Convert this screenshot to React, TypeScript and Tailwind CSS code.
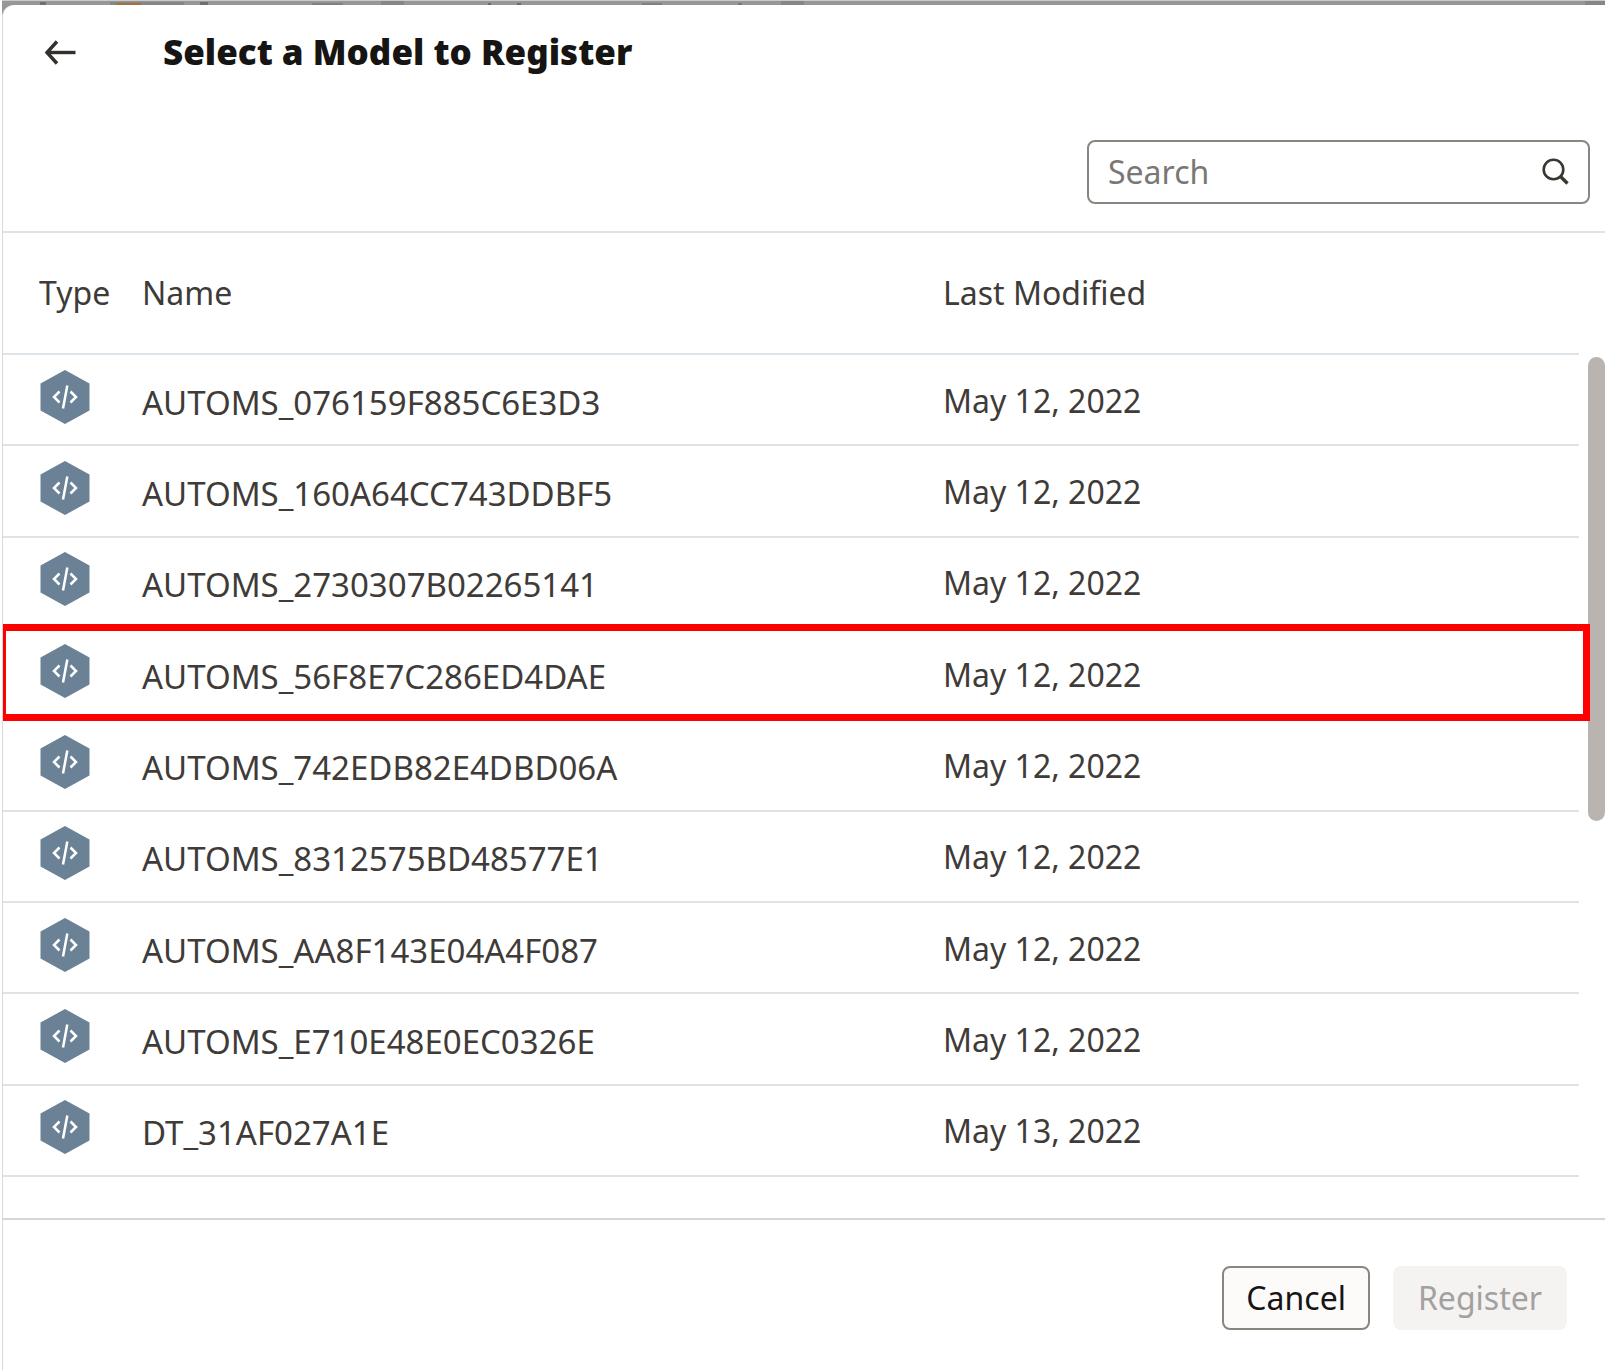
import React from "react";

const models = [
  { name: "AUTOMS_076159F885C6E3D3", modified: "May 12, 2022" },
  { name: "AUTOMS_160A64CC743DDBF5", modified: "May 12, 2022" },
  { name: "AUTOMS_2730307B02265141", modified: "May 12, 2022" },
  { name: "AUTOMS_56F8E7C286ED4DAE", modified: "May 12, 2022", marked: true },
  { name: "AUTOMS_742EDB82E4DBD06A", modified: "May 12, 2022" },
  { name: "AUTOMS_8312575BD48577E1", modified: "May 12, 2022" },
  { name: "AUTOMS_AA8F143E04A4F087", modified: "May 12, 2022" },
  { name: "AUTOMS_E710E48E0EC0326E", modified: "May 12, 2022" },
  { name: "DT_31AF027A1E", modified: "May 13, 2022" },
];

function BackdropEdge() {
  return (
    <svg className="block h-1 w-full" aria-hidden="true">
      <rect x="38" y="1" width="6" height="3" fill="#6f716e" />
      <rect x="108" y="1" width="74" height="3" fill="#858784" />
      <rect x="114" y="2" width="25" height="2" fill="#a5703c" />
      <rect x="198" y="1" width="8" height="3" fill="#6f716e" />
      <rect x="310" y="2" width="31" height="2" fill="#7f817e" />
      <rect x="379" width="23" height="4" fill="#858784" />
      <rect x="486" y="2" width="3" height="2" fill="#6a6c62" />
      <rect x="515" y="2" width="4" height="2" fill="#6a6c62" />
      <rect x="640" y="2" width="20" height="2" fill="#7f817e" />
      <rect x="736" y="2" width="4" height="2" fill="#6f7d76" />
      <rect x="779" width="23" height="4" fill="#858784" />
      <rect x="1583" width="25" height="4" fill="#858784" />
    </svg>
  );
}

function BackIcon() {
  return (
    <svg viewBox="0 0 32 30" className="h-[30px] w-8" fill="none" stroke="#33302d" strokeWidth="3.4" aria-hidden="true">
      <path d="M31.5 15.5H2.5" />
      <path d="M13 4.5 3 15.5 13 26.5" />
    </svg>
  );
}

function SearchIcon() {
  return (
    <svg viewBox="0 0 28 28" className="h-7 w-7" fill="none" stroke="#3a3632" strokeWidth="2.6" aria-hidden="true">
      <circle cx="12.5" cy="11.5" r="9.8" />
      <path d="M19.5 18.5l7 7" strokeWidth="3.4" />
    </svg>
  );
}

function ModelIcon() {
  return (
    <svg viewBox="0 0 50 56" className="h-14 w-[50px]" role="img" aria-label="Model">
      <path d="M25 1 49.5 14.5V41.5L25 55 .5 41.5V14.5Z" fill="#6b8296" />
      <g fill="none" stroke="#fff" strokeWidth="2.5">
        <path d="M19.5 22.5 14 28l5.5 5.5" />
        <path d="M30.5 22.5 36 28l-5.5 5.5" />
        <path d="M27.3 16.5 23 39.5" />
      </g>
    </svg>
  );
}

export default function App() {
  return (
    <div className="min-h-screen bg-white pr-[3px] pl-[2px] font-['Noto_Sans',sans-serif] text-[32px] leading-10 text-[#3e3b38]">
      <div className="border-t border-[#c9cbc8] bg-[#969896]">
        <BackdropEdge />
        <main className="flex min-h-[1365px] flex-col rounded-tl-xl border-l border-[#d9d9d9] bg-white">
          <header className="flex h-[94px] items-center gap-[87px] pl-[41px]">
            <button type="button" aria-label="Back">
              <BackIcon />
            </button>
            <h1 className="text-[35px] font-black text-[#161513]">Select a Model to Register</h1>
          </header>

          <div className="flex justify-end border-b-2 border-[#e4e2e0] pt-[41px] pr-[15px] pb-[27px]">
            <label className="flex h-16 w-[503px] items-center rounded-lg border-2 border-[#8b8580] px-[19px]">
              <input
                type="text"
                aria-label="Search"
                placeholder="Search"
                className="min-w-0 flex-1 outline-none placeholder:text-[#7a7774]"
              />
              <SearchIcon />
            </label>
          </div>

          <section className="flex items-start gap-[9px]">
            <table className="h-[944px] flex-1 table-fixed border-collapse text-left">
              <thead>
                <tr className="h-[121px] border-b-2 border-[#dce4ea]">
                  <th scope="col" className="w-[139px] pl-9 font-normal">Type</th>
                  <th scope="col" className="font-normal">Name</th>
                  <th scope="col" className="w-[636px] font-normal">Last Modified</th>
                </tr>
              </thead>
              <tbody>
                {models.map((m) => (
                  <tr key={m.name} className="relative border-b-2 border-[#e2e2e2]">
                    <td className="pb-1.5 pl-[37px]">
                      <ModelIcon />
                      {m.marked && (
                        <div className="pointer-events-none absolute -top-1 -right-[11px] -bottom-1 left-0 z-10 border-[7px] border-l-[3px] border-[#ff0000]" />
                      )}
                    </td>
                    <td className="pt-1.5 text-[33px]">{m.name}</td>
                    <td className="pt-0.5">{m.modified}</td>
                  </tr>
                ))}
              </tbody>
            </table>
            <div className="mt-[124px] h-[464px] w-[17px] rounded-full bg-[#bab4b0]" />
          </section>

          <footer className="mt-[41px] flex flex-1 items-start justify-end gap-[23px] border-t-2 border-[#d8d4d0] pt-[46px] pr-[38px]">
            <button type="button" className="h-16 rounded-lg border-2 border-[#8b8580] bg-[#fcfbfa] px-[22px] text-[#161513]">
              Cancel
            </button>
            <button type="button" disabled className="h-16 rounded-lg bg-[#f4f3f2] px-[25px] text-[#a3a1a0]">
              Register
            </button>
          </footer>
        </main>
      </div>
    </div>
  );
}
